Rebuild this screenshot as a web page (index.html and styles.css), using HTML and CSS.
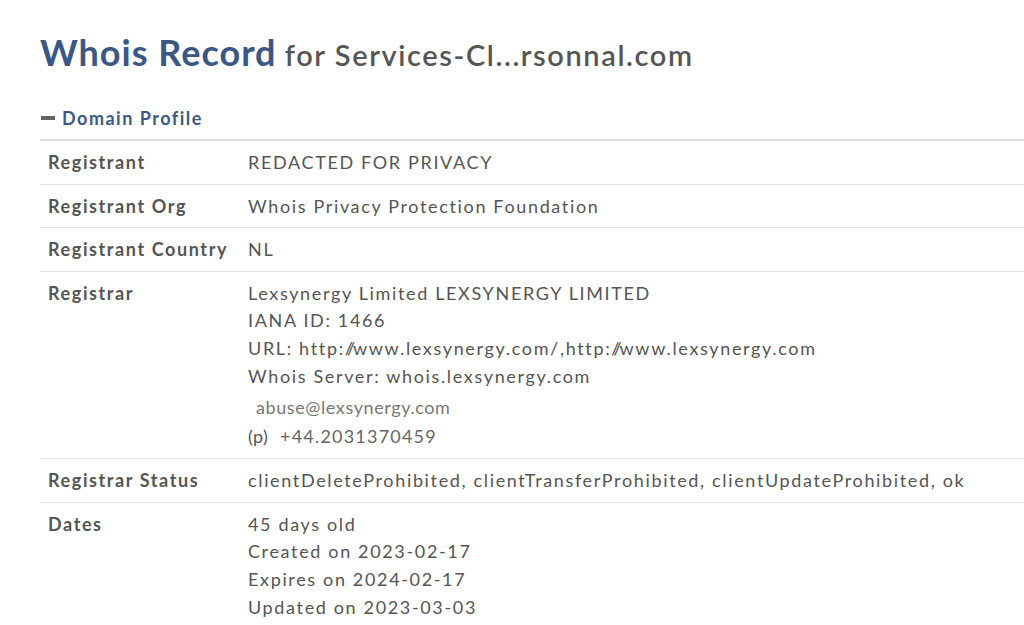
FILE: index.html
```html
<!DOCTYPE html>
<html lang="en">
<head>
    <meta charset="UTF-8">
    <title>Whois Record for Services-Cl...rsonnal.com</title>
    <link rel="stylesheet" href="styles.css">
</head>
<body>
    <div class="page">
        <h1><span class="title-main">Whois Record</span> <span class="title-sub">for Services-Cl...rsonnal.com</span></h1>

        <div class="section-head">
            <span class="toggle"></span>
            <span>Domain Profile</span>
        </div>

        <table class="profile">
            <tr>
                <th>Registrant</th>
                <td>REDACTED FOR PRIVACY</td>
            </tr>
            <tr>
                <th>Registrant Org</th>
                <td>Whois Privacy Protection Foundation</td>
            </tr>
            <tr>
                <th>Registrant Country</th>
                <td>NL</td>
            </tr>
            <tr>
                <th>Registrar</th>
                <td>
                    Lexsynergy Limited LEXSYNERGY LIMITED<br>
                    IANA ID: 1466<br>
                    URL: http:<span class="slashes">//</span>www.lexsynergy.com/,http:<span class="slashes">//</span>www.lexsynergy.com<br>
                    Whois Server: whois.lexsynergy.com
                    <div class="contact">
                        <div class="email">abuse@lexsynergy.com</div>
                        <div class="phone"><span class="p">(p)</span> +44.2031370459</div>
                    </div>
                </td>
            </tr>
            <tr>
                <th>Registrar Status</th>
                <td>clientDeleteProhibited, clientTransferProhibited, clientUpdateProhibited, ok</td>
            </tr>
            <tr>
                <th>Dates</th>
                <td>
                    45 days old<br>
                    Created on 2023-02-17<br>
                    Expires on 2024-02-17<br>
                    Updated on 2023-03-03
                </td>
            </tr>
        </table>
    </div>
</body>
</html>
```

FILE: styles.css
```css
body {
    margin: 0;
    font-family: Lato, "Open Sans", sans-serif;
    background-color: white;
    color: #555;
}
.page {
    padding: 22px 0 0 40px;
}
h1 {
    margin: 0 0 22px 0;
    font-weight: normal;
    line-height: 60px;
}
.title-main {
    font-size: 36px;
    font-weight: bold;
    color: #3a5785;
    letter-spacing: 1px;
}
.title-sub {
    font-size: 29px;
    font-weight: 600;
    color: #555;
    letter-spacing: 1.6px;
}
.section-head {
    display: flex;
    align-items: center;
    gap: 7px;
    font-size: 18px;
    font-weight: bold;
    color: #3c5a85;
    letter-spacing: 1.5px;
    padding-bottom: 10px;
    border-bottom: 2px solid #ddd;
}
.toggle {
    width: 14px;
    height: 4px;
    background-color: #666;
    margin-left: 1px;
}
.profile {
    width: 100%;
    border-collapse: collapse;
    font-size: 18px;
    letter-spacing: 1.65px;
}
.profile th,
.profile td {
    text-align: left;
    vertical-align: top;
    padding: 10px 8px 10px 8px;
    line-height: 22px;
    border-bottom: 1px solid #e3e3e3;
}
.profile th {
    width: 184px;
    font-weight: bold;
    color: #555;
    letter-spacing: 1.6px;
}
.profile td {
    color: #555;
    line-height: 27.6px;
    padding-top: 8px;
    padding-bottom: 7px;
}
.slashes {
    letter-spacing: -2px;
}
.contact {
    margin-top: 3px;
    font-size: 18px;
    letter-spacing: 0.6px;
    color: #666;
    line-height: 29px;
}
.email {
    padding-left: 8px;
    color: #777;
}
.phone {
    letter-spacing: 1.2px;
}
.phone .p {
    margin-right: 6px;
    color: #555;
    letter-spacing: 0.4px;
}
```
